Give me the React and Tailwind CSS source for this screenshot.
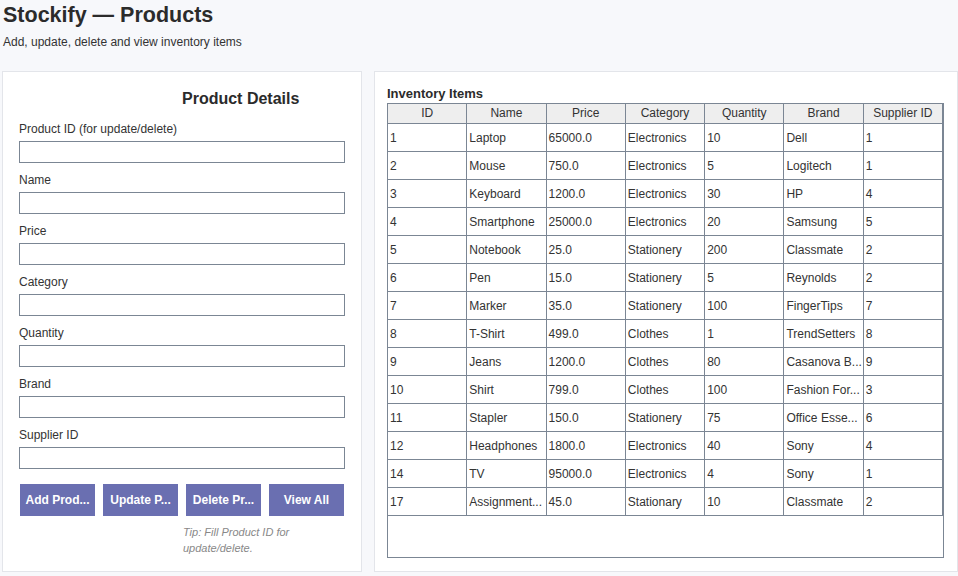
import React from 'react';

const fields = ['Product ID (for update/delete)', 'Name', 'Price', 'Category', 'Quantity', 'Brand', 'Supplier ID'];

const buttons = ['Add Prod...', 'Update P...', 'Delete Pr...', 'View All'];

const columns = ['ID', 'Name', 'Price', 'Category', 'Quantity', 'Brand', 'Supplier ID'];

const rows = [
  ['1', 'Laptop', '65000.0', 'Electronics', '10', 'Dell', '1'],
  ['2', 'Mouse', '750.0', 'Electronics', '5', 'Logitech', '1'],
  ['3', 'Keyboard', '1200.0', 'Electronics', '30', 'HP', '4'],
  ['4', 'Smartphone', '25000.0', 'Electronics', '20', 'Samsung', '5'],
  ['5', 'Notebook', '25.0', 'Stationery', '200', 'Classmate', '2'],
  ['6', 'Pen', '15.0', 'Stationery', '5', 'Reynolds', '2'],
  ['7', 'Marker', '35.0', 'Stationery', '100', 'FingerTips', '7'],
  ['8', 'T-Shirt', '499.0', 'Clothes', '1', 'TrendSetters', '8'],
  ['9', 'Jeans', '1200.0', 'Clothes', '80', 'Casanova B...', '9'],
  ['10', 'Shirt', '799.0', 'Clothes', '100', 'Fashion For...', '3'],
  ['11', 'Stapler', '150.0', 'Stationery', '75', 'Office Esse...', '6'],
  ['12', 'Headphones', '1800.0', 'Electronics', '40', 'Sony', '4'],
  ['14', 'TV', '95000.0', 'Electronics', '4', 'Sony', '1'],
  ['17', 'Assignment...', '45.0', 'Stationary', '10', 'Classmate', '2'],
];

const ProductForm = () => (
  <div className="w-[360px] h-[501px] bg-white border border-[#e3e5ea] px-[16px] pt-[17px]">
    <div className="pl-[163px] text-[16px] leading-[20px] font-bold text-[#2b2b2b]">Product Details</div>
    <div className="mt-[13px] flex flex-col gap-[10px]">
      {fields.map(label => (
        <div key={label}>
          <div className="text-[12px] leading-[14px] text-[#333] mb-[5px]">{label}</div>
          <input type="text" className="block w-full h-[22px] bg-white border border-[#7b8694] outline-none" />
        </div>
      ))}
    </div>
    <div className="flex gap-[8px] px-[1px] mt-[15px]">
      {buttons.map(b => (
        <button key={b} className="w-[75px] h-[32px] bg-[#6a6fb1] text-white text-[12px] font-bold whitespace-nowrap">{b}</button>
      ))}
    </div>
    <div className="mt-[9px] pl-[164px] text-[11px] leading-[15.5px] italic text-[#888]">
      Tip: Fill Product ID for<br />update/delete.
    </div>
  </div>
);

const InventoryTable = () => (
  <div className="w-[584px] h-[501px] bg-white border border-[#e3e5ea] px-[12px] pt-[14px]">
    <div className="text-[13px] leading-[16px] font-bold text-[#2b2b2b]">Inventory Items</div>
    <div className="mt-[1px] w-[557px] h-[455px] border border-[#7b8694] bg-white">
      <div className="grid grid-cols-7">
        {columns.map(c => (
          <div key={c} className="h-[20px] bg-[#eeeeee] border-r border-b border-[#7b8694] text-[12px] leading-[19px] text-center text-[#333] whitespace-nowrap overflow-hidden">{c}</div>
        ))}
        {rows.map(r => r.map((cell, i) => (
          <div key={r[0] + '-' + i} className="h-[28px] border-r border-b border-[#7b8694] pl-[2px] text-[12px] leading-[28px] text-[#333] whitespace-nowrap overflow-hidden">{cell}</div>
        )))}
      </div>
    </div>
  </div>
);

export default function App() {
  return (
    <div className="w-[958px] h-[576px] bg-[#f7f8fb] overflow-hidden" style={{ fontFamily: '"Liberation Sans", Arial, sans-serif' }}>
      <div className="pl-[3px] pt-[2px]">
        <div className="text-[21.5px] leading-[26px] font-bold text-[#2b2b2b]">Stockify — Products</div>
        <div className="mt-[7px] text-[12px] leading-[14px] text-[#333]">Add, update, delete and view inventory items</div>
      </div>
      <div className="flex gap-[12px] pl-[2px] mt-[22px]">
        <ProductForm />
        <InventoryTable />
      </div>
    </div>
  );
}
